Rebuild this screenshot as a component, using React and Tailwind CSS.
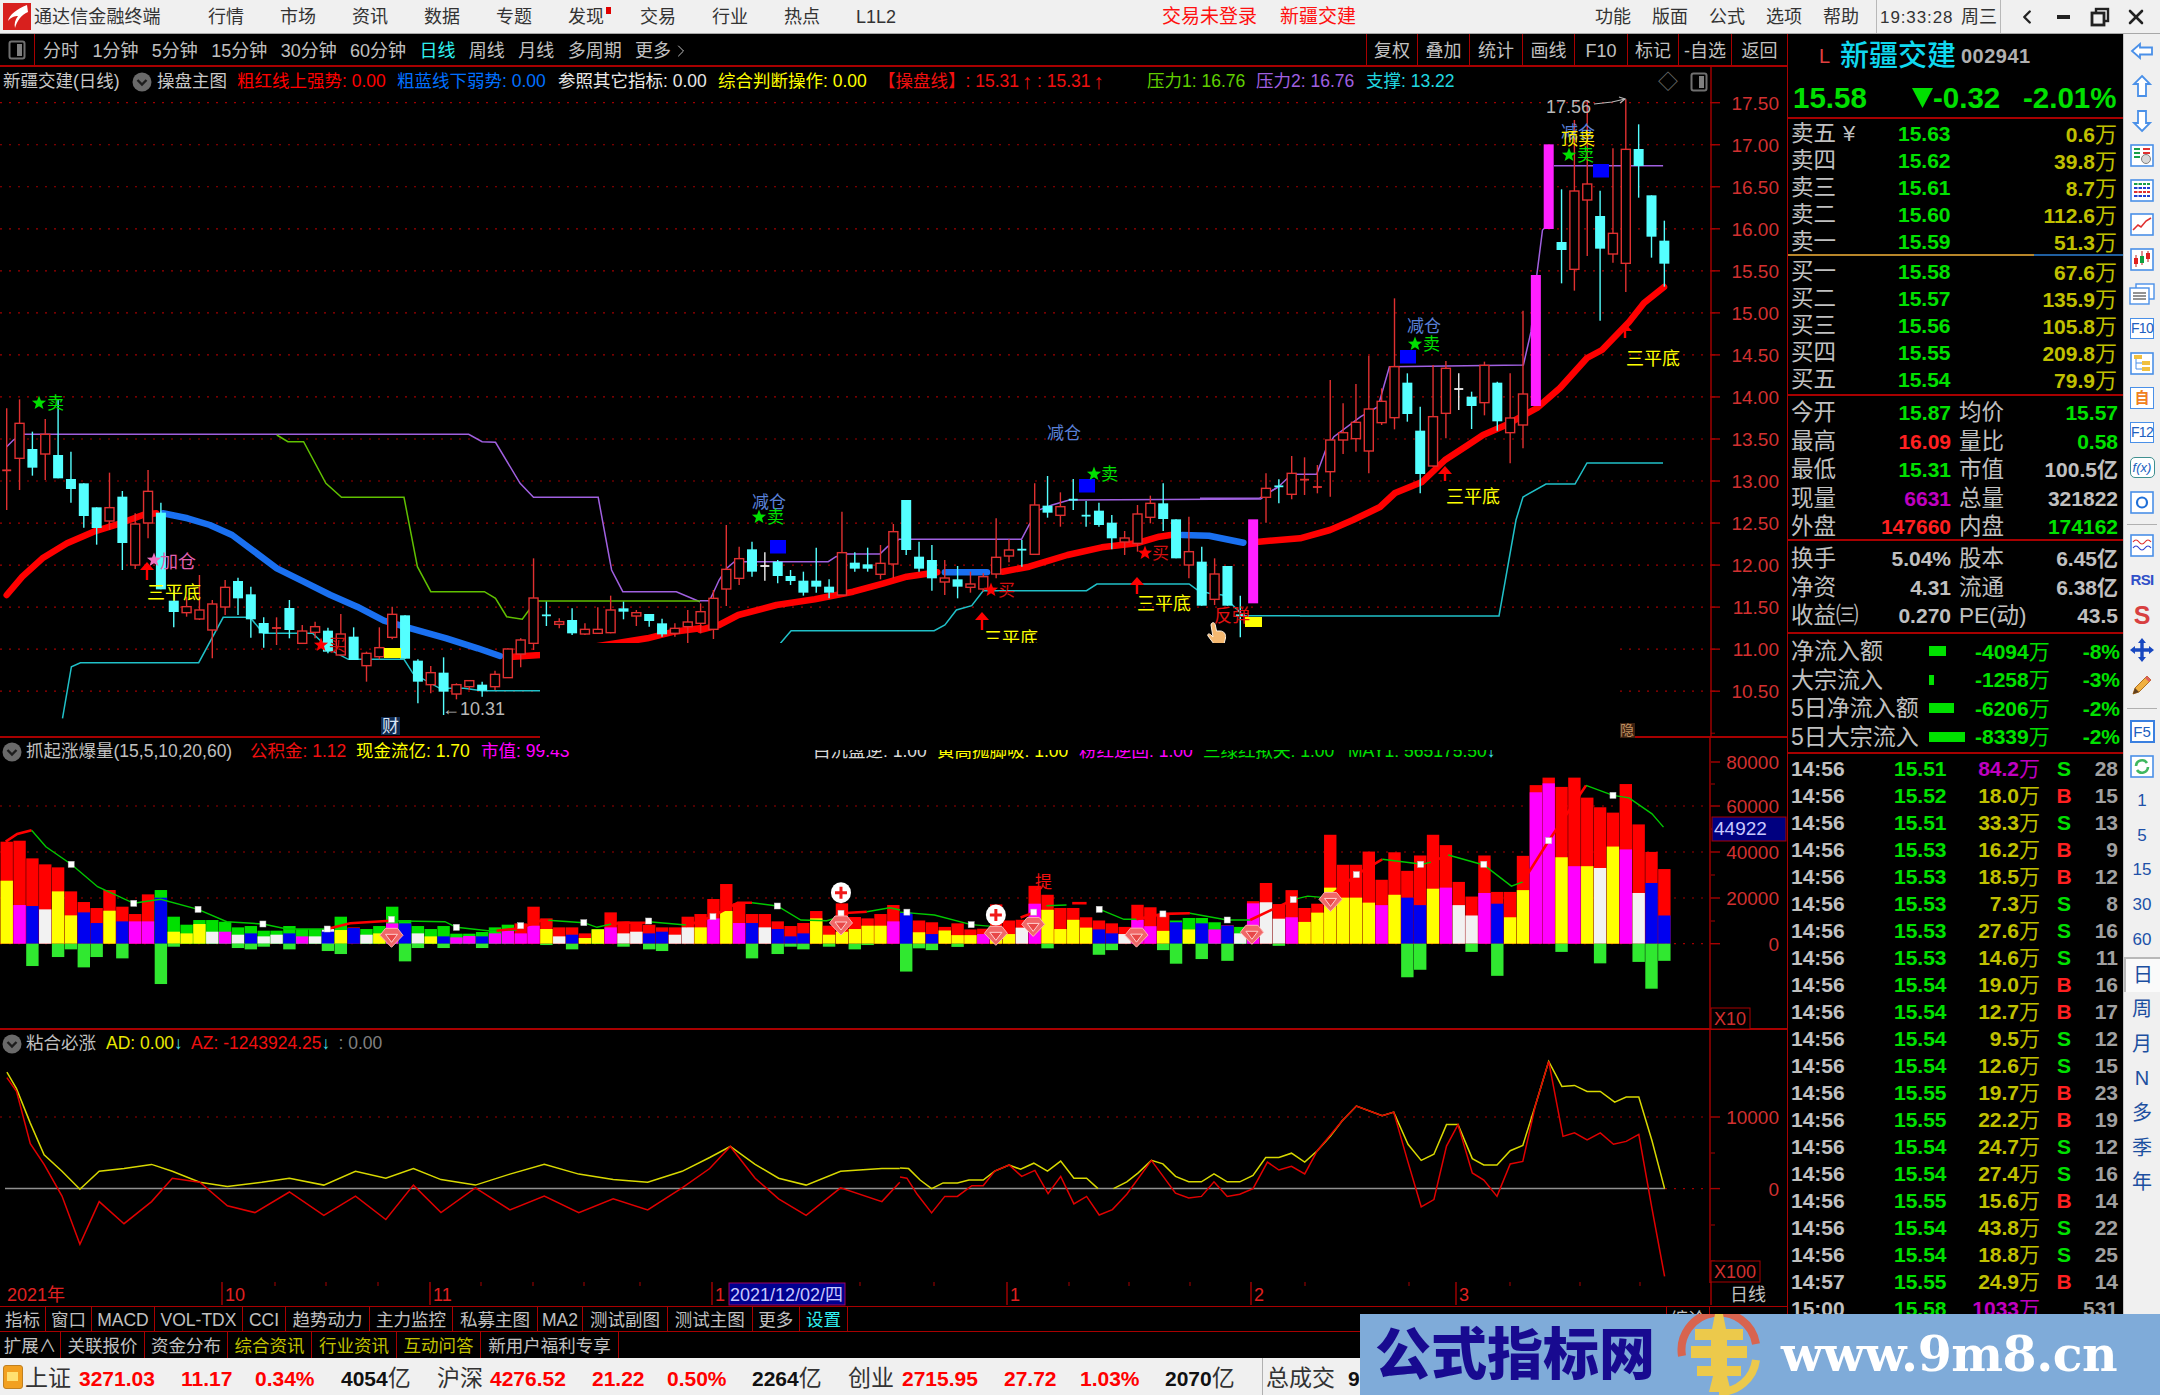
import { ChevronLeft, ChevronRight, X } from 'lucide-react'

// 坐标换算：从参考图的各个裁剪区域读出来的点，统一转成页面像素
const z7 = ([x, y]) => [x / 2.24, 380 + y / 3]
const z8 = ([x, y]) => [700 + x / 2.613, 440 + y / 3]
const z9 = ([x, y]) => [1200 + x / 2.613, 80 + y / 3]
const z10 = ([x, y]) => [x / 1.742, 730 + y / 3]
const z11 = ([x, y]) => [900 + x / 1.742, 730 + y / 2.8]
const s = ([x, y]) => [x * 1.378, y * 1.378]
const pts = (arr, fn) => arr.map(fn).map(([x, y]) => `${x.toFixed(1)},${y.toFixed(1)}`).join(' ')

const RED = '#a80000'
const candleX = (i) => 6.7 + 12.85 * i
const priceY = (p) => 102.7 + (17.5 - p) * 84.07

// [类型, 高, 实体上, 实体下, 低]
const candlesA = [
  ['r', 85, 271, 274, 390], ['r', 58, 130, 235, 330], ['c', 155, 207, 263, 287], ['r', 117, 163, 222, 300],
  ['c', 60, 225, 295, 295], ['c', 215, 297, 327, 368], ['c', 310, 310, 408, 443], ['c', 382, 382, 444, 494],
  ['r', 278, 383, 423, 450], ['c', 333, 350, 489, 570], ['r', 400, 432, 555, 567], ['r', 270, 334, 429, 475],
  ['c', 368, 398, 628, 628], ['c', 630, 662, 696, 742], ['r', 650, 680, 698, 710], ['r', 585, 690, 717, 720],
  ['r', 660, 672, 750, 835], ['r', 600, 622, 681, 705], ['c', 593, 603, 655, 705], ['c', 620, 643, 718, 773],
  ['c', 712, 729, 760, 803], ['r', 712, 744, 748, 795], ['c', 660, 684, 750, 775], ['r', 735, 753, 790, 790],
  ['r', 725, 740, 757, 775], ['c', 743, 752, 815, 820], ['r', 702, 762, 825, 825], ['c', 742, 770, 840, 840],
  ['r', 815, 820, 857, 905], ['r', 742, 803, 830, 838], ['r', 680, 703, 772, 778], ['c', 706, 706, 836, 836],
  ['c', 838, 842, 905, 970], ['r', 858, 878, 914, 940], ['c', 832, 878, 935, 1005], ['r', 910, 914, 942, 958],
  ['r', 900, 902, 920, 930], ['c', 905, 914, 932, 950], ['r', 872, 883, 920, 930], ['r', 805, 807, 893, 893],
  ['r', 775, 780, 822, 862], ['r', 535, 654, 790, 810], ['c', 665, 706, 709, 738], ['r', 715, 725, 733, 745],
  ['c', 685, 720, 760, 765], ['r', 730, 748, 762, 765], ['r', 682, 748, 760, 760], ['r', 647, 690, 758, 760],
  ['c', 665, 685, 695, 718], ['r', 690, 698, 708, 738], ['c', 702, 702, 723, 740], ['c', 716, 730, 763, 770],
  ['r', 730, 745, 760, 770], ['r', 690, 726, 740, 790], ['r', 670, 695, 730, 760],
]
const candlesB = [
  ['r', 450, 475, 568, 597], ['r', 255, 388, 447, 498], ['r', 320, 356, 415, 435], ['c', 305, 328, 395, 410],
  ['w', 337, 378, 380, 422], ['c', 360, 365, 408, 430], ['c', 390, 408, 423, 435], ['c', 395, 422, 458, 467],
  ['c', 323, 422, 440, 458], ['c', 418, 440, 458, 475], ['r', 215, 338, 465, 465], ['c', 337, 368, 386, 395],
  ['c', 323, 373, 386, 395], ['r', 315, 370, 403, 418], ['r', 252, 275, 372, 415], ['c', 180, 180, 330, 345],
  ['c', 305, 350, 386, 395], ['c', 315, 360, 415, 452], ['r', 360, 414, 426, 465], ['c', 378, 418, 440, 475],
  ['r', 395, 432, 442, 458], ['r', 400, 410, 447, 455], ['r', 235, 352, 402, 415], ['r', 298, 330, 348, 367],
  ['c', 300, 329, 331, 380], ['r', 130, 195, 343, 343], ['c', 108, 197, 218, 233], ['r', 157, 200, 226, 260],
  ['c', 117, 179, 181, 210], ['c', 183, 227, 229, 260], ['c', 188, 212, 255, 260], ['c', 225, 248, 295, 328],
  ['r', 273, 294, 306, 345], ['r', 195, 222, 310, 335], ['r', 167, 190, 232, 250], ['c', 130, 190, 237, 273],
  ['c', 238, 238, 355, 355], ['r', 230, 335, 375, 415], ['c', 320, 365, 497, 497], ['r', 355, 402, 478, 495],
  ['c', 378, 378, 497, 497], ['c', 467, 526, 528, 592], ['m', 238, 238, 490, 490], ['r', 100, 145, 172, 248],
  ['c', 118, 139, 141, 190],
]
const candlesC = [
  ['r', 1128, 1180, 1243, 1258], ['r', 1132, 1199, 1201, 1245], ['r', 1155, 1221, 1223, 1240], ['r', 900, 1080, 1175, 1250],
  ['r', 970, 1058, 1080, 1122], ['r', 912, 1027, 1076, 1115], ['r', 827, 987, 1113, 1180], ['r', 925, 964, 1028, 1035],
  ['r', 655, 860, 1013, 1048], ['c', 880, 908, 1002, 1025], ['c', 980, 1052, 1182, 1240], ['r', 855, 1010, 1158, 1160],
  ['r', 843, 865, 1000, 1075], ['w', 880, 927, 929, 990], ['c', 935, 950, 978, 1047], ['r', 845, 856, 968, 1006],
  ['c', 905, 908, 1024, 1052], ['r', 880, 1014, 1058, 1150], ['r', 692, 942, 1035, 1105], ['m', 585, 585, 978, 995],
  ['m', 193, 193, 447, 457], ['c', 328, 486, 510, 610], ['r', 120, 333, 568, 632], ['r', 60, 312, 360, 528],
  ['c', 332, 408, 506, 722], ['r', 205, 460, 522, 548], ['r', 58, 208, 550, 636], ['c', 133, 207, 258, 353],
  ['c', 346, 346, 470, 533], ['c', 422, 482, 551, 620],
]
const candles = [
  ...candlesA.map((c) => [c[0], ...c.slice(1).map((y) => 380 + y / 3)]),
  ...candlesB.map((c) => [c[0], ...c.slice(1).map((y) => 440 + y / 3)]),
  ...candlesC.slice(0).map((c) => [c[0], ...c.slice(1).map((y) => 80 + y / 3)]),
]

// 成交量柱：[上段色, 上段顶, 下段色, 下段顶, 负柱底]
const volA = [
  ['r', 335, 'y', 452, 0], ['r', 332, 'm', 525, 0], ['r', 385, 'b', 528, 708], ['r', 403, 'w', 538, 0], ['r', 412, 'y', 484, 681],
  ['r', 484, 'y', 556, 658], ['r', 516, 'b', 547, 712], ['r', 534, 'b', 579, 681], ['r', 480, 'y', 542, 0], ['r', 530, 'b', 574, 685],
  ['r', 552, 'm', 574, 0], ['r', 493, 'm', 574, 0], ['g', 480, 'b', 503, 762], ['g', 560, 'y', 605, 650], ['g', 584, 'y', 610, 0],
  ['g', 570, 'y', 582, 0], ['g', 570, 'w', 605, 0], ['g', 575, 'm', 605, 0], ['g', 592, 'w', 614, 654], ['g', 588, 'b', 610, 658],
  ['g', 602, 'w', 619, 650], ['g', 602, 'w', 614, 0], ['g', 588, 'b', 610, 658], ['g', 597, 'm', 619, 0], ['g', 597, 'w', 619, 0],
  ['w', 597, 'b', 605, 663], ['g', 560, 'y', 600, 672], ['r', 592, 'b', 594, 0], ['g', 597, 'w', 614, 0], ['g', 588, 'y', 610, 0],
  ['g', 530, 'm', 580, 0], ['g', 570, 'b', 580, 694], ['g', 588, 'w', 610, 654], ['g', 597, 'y', 619, 0], ['g', 588, 'b', 619, 654],
  ['g', 611, 'm', 622, 0], ['g', 611, 'm', 618, 0], ['g', 606, 'b', 619, 654], ['g', 592, 'm', 610, 0], ['g', 584, 'm', 597, 0],
  ['r', 580, 'm', 610, 0], ['r', 530, 'm', 587, 0], ['r', 565, 'y', 597, 645], ['r', 592, 'w', 619, 0], ['r', 592, 'b', 614, 658],
  ['r', 610, 'y', 624, 0], ['g', 597, 'y', 598, 0], ['r', 547, 'm', 592, 0], ['r', 574, 'w', 610, 650], ['r', 578, 'w', 605, 0],
  ['r', 584, 'b', 610, 658], ['r', 592, 'b', 605, 663], ['r', 592, 'w', 614, 0], ['r', 560, 'w', 592, 0], ['r', 552, 'y', 592, 0],
  ['r', 507, 'm', 565, 0], ['r', 462, 'y', 543, 0], ['r', 520, 'm', 579, 0], ['r', 552, 'b', 579, 685], ['r', 552, 'w', 592, 0],
  ['r', 574, 'b', 597, 672], ['r', 588, 'b', 619, 650], ['r', 579, 'b', 610, 658], ['r', 543, 'y', 565, 0], ['r', 587, 'y', 614, 650],
  ['r', 520, 'y', 605, 0], ['r', 561, 'y', 597, 658], ['r', 565, 'y', 587, 645], ['r', 552, 'y', 587, 0], ['r', 525, 'm', 574, 0],
]
const volB = [
  ['b', 510, 'b', 515, 675], ['r', 532, 'y', 565, 610], ['r', 537, 'b', 570, 615], ['r', 550, 'y', 560, 0], ['r', 540, 'y', 573, 606],
  ['r', 557, 'y', 573, 0], ['r', 555, 'm', 570, 0], ['r', 487, 'y', 550, 0], ['r', 532, 'y', 570, 0], ['r', 530, 'w', 552, 0],
  ['r', 435, 'm', 485, 0], ['r', 460, 'y', 502, 610], ['r', 497, 'y', 556, 0], ['r', 497, 'y', 530, 0], ['r', 523, 'y', 552, 0],
  ['r', 532, 'b', 557, 628], ['r', 540, 'b', 568, 615], ['r', 550, 'w', 570, 0], ['r', 488, 'm', 530, 0], ['r', 495, 'm', 548, 0],
  ['r', 515, 'y', 561, 615], ['g', 532, 'b', 537, 653], ['g', 525, 'y', 557, 0], ['g', 525, 'b', 540, 640], ['g', 537, 'm', 557, 0],
  ['r', 545, 'b', 546, 645], ['g', 550, 'w', 568, 0], ['r', 478, 'm', 484, 0], ['r', 427, 'w', 481, 0], ['r', 486, 'w', 527, 603],
  ['r', 447, 'm', 523, 0], ['r', 497, 'y', 536, 0], ['r', 485, 'y', 510, 0], ['r', 292, 'y', 440, 0], ['r', 376, 'y', 468, 0],
  ['r', 376, 'y', 468, 0], ['r', 339, 'y', 482, 0], ['r', 418, 'm', 489, 0], ['r', 341, 'y', 460, 0], ['r', 393, 'b', 468, 691],
  ['r', 350, 'b', 489, 670], ['r', 292, 'y', 443, 0], ['r', 321, 'm', 440, 0], ['r', 424, 'w', 489, 0], ['r', 465, 'w', 518, 620],
  ['r', 350, 'm', 455, 0], ['r', 452, 'b', 485, 687], ['r', 452, 'y', 523, 0], ['r', 351, 'y', 447, 0], ['r', 153, 'm', 173, 0],
  ['r', 132, 'm', 148, 0], ['r', 158, 'y', 355, 620], ['r', 132, 'm', 380, 0], ['r', 188, 'y', 380, 0], ['r', 215, 'w', 385, 652],
  ['r', 230, 'y', 325, 0], ['r', 150, 'm', 333, 0], ['r', 263, 'w', 455, 648], ['r', 340, 'b', 427, 723], ['r', 388, 'b', 518, 645],
]
const volColors = { r: '#ff0000', g: '#00e000', y: '#ffff00', b: '#0000f0', m: '#ff00ff', w: '#f2f2f2' }
const volY = 943.7
const volBars = [
  ...volA.map((v) => ({ top: (641 - v[1]) / 3, tc: v[0], low: (641 - v[3]) / 3, lc: v[2], neg: v[4] ? (v[4] - 641) / 3 : 0 })),
  ...volB.map((v) => ({ top: (597 - v[1]) / 2.8, tc: v[0], low: (597 - v[3]) / 2.8, lc: v[2], neg: v[4] ? (v[4] - 597) / 2.8 : 0 })),
]

const volLines = [
  ['r', z10, [[10, 335], [30, 312], [55, 301]]],
  ['g', z10, [[55, 301], [80, 350], [124, 403], [170, 470], [233, 520], [250, 515], [280, 508], [345, 538], [395, 575], [458, 582], [500, 597], [570, 597]]],
  ['r', z10, [[570, 597], [610, 580], [680, 572]]],
  ['g', z10, [[680, 572], [775, 575], [795, 592], [850, 602], [900, 600]]],
  ['r', z10, [[865, 602], [905, 595], [945, 570]]],
  ['g', z10, [[955, 571], [1017, 578], [1040, 592], [1065, 582]]],
  ['r', z10, [[1065, 582], [1090, 578], [1130, 578]]],
  ['g', z10, [[1130, 575], [1195, 585]]],
  ['r', z10, [[1195, 588], [1240, 560], [1285, 518], [1310, 518]]],
  ['g', z10, [[1310, 518], [1354, 528], [1395, 570], [1440, 572], [1465, 560]]],
  ['r', z10, [[1465, 550], [1510, 545]]],
  ['g', z10, [[1510, 545], [1550, 533], [1568, 540]]],
  ['g', z11, [[0, 510], [60, 518], [124, 545], [160, 550]]],
  ['r', z11, [[210, 525], [235, 510]]],
  ['g', z11, [[255, 492], [290, 490]]],
  ['r', z11, [[300, 485], [325, 485]]],
  ['g', z11, [[345, 500], [390, 530], [412, 530]]],
  ['r', z11, [[412, 530], [458, 515], [505, 513]]],
  ['g', z11, [[505, 513], [570, 532], [610, 532]]],
  ['r', z11, [[610, 532], [685, 475]]],
  ['g', z11, [[685, 475], [710, 465], [745, 470]]],
  ['r', z11, [[745, 470], [795, 405], [840, 362]]],
  ['g', z11, [[840, 362], [910, 376], [925, 370]]],
  ['r', z11, [[925, 370], [955, 350]]],
  ['g', z11, [[955, 350], [1017, 378], [1065, 437], [1085, 425]]],
  ['r', z11, [[1085, 425], [1130, 310], [1195, 155]]],
  ['g', z11, [[1195, 155], [1242, 183], [1270, 190], [1310, 235], [1330, 272]]],
]
const volMarks = [
  ...[[124, 403], [233, 520], [345, 538], [458, 582], [570, 597], [682, 568], [795, 592], [907, 587], [1017, 578], [1130, 573], [1242, 560], [1354, 528], [1465, 550]].map(z10),
  ...[[12, 510], [124, 545], [233, 510], [347, 502], [458, 515], [570, 532], [685, 475], [795, 405], [907, 376], [1017, 376], [1130, 310], [1242, 183]].map(z11),
]
const gems = [...[[682, 622], [1465, 585]].map(z10), ...[[167, 575], [232, 550], [412, 580], [613, 572], [750, 480]].map(z11)]

const adYellowL = [[5, 778], [12, 790], [22, 815], [32, 838], [45, 850], [58, 863], [72, 850], [90, 848], [110, 845], [125, 850], [145, 858], [165, 861], [190, 858], [210, 855], [235, 860], [258, 850], [280, 855], [300, 848], [320, 856], [345, 860], [370, 852], [395, 845], [420, 852], [445, 856], [470, 858], [495, 850], [515, 840], [530, 832], [548, 845], [565, 855], [585, 860], [610, 850], [640, 848], [653, 848]]
const adRedL = [[5, 782], [12, 792], [22, 830], [32, 845], [45, 868], [58, 903], [72, 872], [90, 888], [110, 872], [125, 855], [145, 858], [165, 875], [185, 880], [210, 865], [235, 882], [258, 868], [280, 885], [300, 860], [320, 880], [345, 862], [370, 878], [395, 868], [420, 880], [445, 870], [470, 878], [495, 862], [515, 848], [530, 832], [548, 855], [565, 870], [585, 882], [610, 862], [640, 872], [653, 858]]
const adYellowR = [[0, 1226], [15, 1228], [35, 1260], [55, 1284], [75, 1268], [100, 1268], [120, 1260], [145, 1260], [165, 1235], [190, 1218], [210, 1230], [233, 1213], [257, 1235], [280, 1207], [303, 1255], [325, 1255], [345, 1284]]
const adYellowR2 = [[372, 1284], [395, 1265], [415, 1240], [438, 1205], [458, 1215], [480, 1250], [503, 1265], [525, 1265], [547, 1243], [570, 1265], [592, 1265], [615, 1247], [637, 1197], [660, 1197], [682, 1185], [705, 1210], [727, 1178], [750, 1137], [770, 1095], [795, 1053], [840, 1080], [860, 1070], [885, 1160], [908, 1205], [930, 1188], [952, 1105], [972, 1105], [997, 1200], [1017, 1218], [1040, 1218], [1063, 1178], [1085, 1163], [1107, 1050], [1130, 928], [1153, 998], [1175, 995], [1197, 1012], [1220, 1012], [1245, 1042], [1265, 1028], [1287, 1028], [1310, 1150], [1332, 1284]]
const adRedR = [[0, 1252], [12, 1255], [30, 1300], [55, 1352], [78, 1306], [100, 1306], [125, 1276], [145, 1276], [165, 1235], [190, 1218], [212, 1250], [235, 1233], [258, 1298], [280, 1250], [303, 1327], [325, 1306], [347, 1358], [370, 1343], [395, 1300], [438, 1205], [480, 1297], [503, 1310], [525, 1306], [547, 1265], [570, 1306], [592, 1300], [615, 1284], [640, 1210], [660, 1232], [682, 1222], [705, 1243], [727, 1178], [770, 1095], [795, 1053], [840, 1080], [860, 1070], [885, 1210], [908, 1335], [930, 1315], [952, 1165], [972, 1105], [997, 1240], [1017, 1260], [1040, 1306], [1063, 1215], [1085, 1208], [1107, 1050], [1130, 928], [1155, 1138], [1175, 1128], [1197, 1148], [1220, 1128], [1243, 1160], [1265, 1152], [1287, 1132], [1310, 1340], [1332, 1530]]

// 主图上的文字标注
const LABELS = [
  ['卖', 47, 403, '#00e000', 17], ['加仓', 160, 561, '#e060b0', 18], ['三平底', 147, 592, '#ffff00', 18], ['买', 329, 645, '#d01010', 17],
  ['减仓', 752, 502, '#5a80d8', 17], ['卖', 767, 517, '#00e000', 17], ['买', 998, 590, '#d01010', 17], ['三平底', 984, 638, '#ffff00', 18],
  ['减仓', 1047, 433, '#5a80d8', 17], ['卖', 1101, 474, '#00e000', 17], ['买', 1152, 553, '#d01010', 17], ['三平底', 1137, 603, '#ffff00', 18],
  ['反弹', 1214, 615, '#e01010', 18], ['减仓', 1561, 132, '#5a80d8', 17], ['顶卖', 1561, 139, '#ffee00', 17], ['卖', 1577, 155, '#00e000', 17],
  ['减仓', 1407, 326, '#5a80d8', 17], ['卖', 1423, 344, '#00e000', 17], ['三平底', 1446, 496, '#ffff00', 18], ['三平底', 1626, 358, '#ffff00', 18],
  ['←10.31', 442, 708, '#b8b8b8', 18], ['17.56', 1546, 106, '#b8b8b8', 18],
]
const STARS = [[39, 403, '#00e000'], [154, 560, '#f070c0'], [321, 645, '#ff0000'], [759, 517, '#00e000'], [991, 590, '#ff0000'], [1094, 474, '#00e000'], [1145, 553, '#ff0000'], [1569, 155, '#00e000'], [1415, 344, '#00e000']]
const ARROWS = [[147, 562, 580], [982, 612, 630], [1137, 577, 594], [1445, 466, 481], [1625, 323, 338]]
const BLUE_MARKS = [[770, 540], [1079, 479], [1400, 350], [1593, 164]]
const YELLOW_MARKS = [[384, 648], [1245, 617]]

function Star({ x, y, color }) {
  const d = []
  for (let i = 0; i < 10; i++) {
    const r = i % 2 ? 3.2 : 7.5
    const a = -Math.PI / 2 + (i * Math.PI) / 5
    d.push(`${(x + r * Math.cos(a)).toFixed(1)},${(y + r * Math.sin(a)).toFixed(1)}`)
  }
  return <polygon points={d.join(' ')} fill={color} />
}

function Candle({ c, i }) {
  const [t, hi, top, bot, lo] = c
  const x = candleX(i)
  if (t === 'm') {
    return <rect x={x - 5} y={top} width={10} height={bot - top} fill="#ff20ff" />
  }
  const color = t === 'r' ? '#e03030' : t === 'w' ? '#f0f0f0' : '#54ffff'
  const doji = bot - top < 2
  return (
    <g>
      <line x1={x} x2={x} y1={hi} y2={lo} stroke={color} strokeWidth={1.4} />
      {doji ? (
        <line x1={x - 4.5} x2={x + 4.5} y1={top} y2={top} stroke={color} strokeWidth={1.8} />
      ) : t === 'r' ? (
        <rect x={x - 4.5} y={top} width={9} height={bot - top} fill="#000" stroke={color} strokeWidth={1.4} />
      ) : (
        <rect x={x - 5} y={top} width={10} height={bot - top} fill={color} />
      )}
    </g>
  )
}

function PriceAxis({ values, y, tick, label = (v) => v }) {
  return (
    <g>
      {values.map((v) => (
        <g key={v}>
          <line x1={1711} x2={1720} y1={y(v)} y2={y(v)} stroke={RED} strokeWidth={1.4} />
          <text x={1779} y={y(v) + 7} textAnchor="end" fontSize={19} fill="#d23030">{label(v)}</text>
        </g>
      ))}
      {tick.map((t) => <line key={t} x1={1711} x2={1715} y1={t} y2={t} stroke={RED} />)}
    </g>
  )
}

function MainChart() {
  const prices = [17.5, 17, 16.5, 16, 15.5, 15, 14.5, 14, 13.5, 13, 12.5, 12, 11.5, 11, 10.5]
  return (
    <svg className="absolute inset-0" width="1787" height="671" viewBox="0 67 1787 671">
      {prices.map((p) => (
        <line key={p} x1={0} x2={1711} y1={priceY(p)} y2={priceY(p)} stroke="#a00000" strokeDasharray="2 7" strokeWidth={1.2} />
      ))}
      <PriceAxis values={prices} y={priceY} tick={prices.map((p) => priceY(p) + 42)} label={(v) => v.toFixed(2)} />
      <line x1={1711} x2={1711} y1={67} y2={738} stroke={RED} strokeWidth={1.4} />
      <line x1={0} x2={1787} y1={737} y2={737} stroke={RED} strokeWidth={2} />

      {/* 压力/支撑细线 */}
      <g fill="none" strokeWidth={1.5}>
        <polyline stroke="#a060e0" points={pts([[15, 200], [30, 180], [50, 163], [1050, 163], [1080, 185], [1110, 187], [1165, 310], [1195, 352], [1340, 352], [1370, 570], [1395, 635], [1515, 635], [1568, 665]], z7)} />
        <polyline stroke="#a060e0" points={pts([[0, 482], [25, 482], [50, 420], [70, 385], [90, 365], [335, 365], [355, 350], [385, 342], [470, 342], [490, 320], [520, 298], [840, 298], [860, 255], [885, 210], [920, 195], [965, 180], [1465, 177], [1490, 155], [1513, 140]], z8)} />
        <polyline stroke="#a060e0" points={pts([[0, 1255], [155, 1255], [205, 1220], [240, 1183], [305, 1183], [330, 1105], [350, 1070], [420, 1010], [465, 980], [495, 860], [845, 855], [865, 755], [880, 585], [895, 450], [900, 445]], z9)} />
        <polyline stroke="#a060e0" points={pts([[925, 257], [1210, 257]], z9)} />
        <polyline stroke="#60c000" points={pts([[620, 165], [645, 185], [680, 185], [730, 310], [765, 352], [905, 352], [935, 560], [965, 635], [1085, 635], [1110, 655], [1135, 710], [1170, 718], [1185, 690], [1205, 663], [1568, 663]], z7)} />
        <polyline stroke="#20c0c8" points={pts([[140, 1015], [160, 860], [180, 848], [445, 848], [500, 712], [560, 712], [590, 760], [700, 760], [740, 810], [780, 838], [905, 838], [925, 880], [985, 925], [1040, 925], [1079, 932], [1210, 932]], z7)} />
        <polyline stroke="#20c0c8" points={pts([[210, 610], [238, 572], [612, 572], [640, 555], [670, 510], [710, 497], [740, 452], [1010, 452], [1037, 432], [1278, 432], [1300, 450], [1330, 460], [1365, 465], [1420, 527], [1530, 527], [1568, 527]], z8)} />
        <polyline stroke="#20c0c8" points="1300,616 1499,616 1516,520 1523,497 1546,484 1575,484 1587,463 1663,463" />
      </g>

      {/* 粗均线 */}
      <g fill="none" strokeWidth={6.5} strokeLinecap="round" strokeLinejoin="round">
        <polyline stroke="#ff0000" points={pts([[15, 645], [50, 590], [95, 535], [150, 490], [210, 455], [270, 430], [320, 405], [350, 400]], z7)} />
        <polyline stroke="#1a70f0" points={pts([[365, 400], [420, 415], [470, 435], [520, 465], [570, 515], [620, 565], [680, 605], [740, 645], [800, 680], [860, 722], [920, 745], [1000, 775], [1070, 805], [1120, 828]], z7)} />
        <polyline stroke="#ff0000" points={pts([[1150, 830], [1210, 825], [1380, 790], [1450, 775], [1510, 755], [1568, 745]], z7)} />
        <polyline stroke="#ff0000" points={pts([[0, 570], [50, 555], [100, 525], [200, 495], [300, 478], [400, 455], [480, 430], [540, 410], [620, 397]], z8)} />
        <polyline stroke="#1a70f0" points={pts([[640, 397], [750, 397]], z8)} />
        <polyline stroke="#ff0000" points={pts([[790, 395], [860, 380], [960, 345], [1050, 322], [1140, 310], [1200, 290], [1230, 285]], z8)} />
        <polyline stroke="#1a70f0" points={pts([[1260, 285], [1330, 287], [1420, 308]], z8)} />
        <polyline stroke="#ff0000" points={`${pts([[1460, 305], [1568, 295]], z8)} 1330,530 1353,520 1380,507 1395,493 1422,482 1445,460 1468,445 1483,435 1506,425 1537,408 1560,388 1587,358 1602,350 1629,322 1644,303 1664,287`} />
      </g>

      {candles.map((c, i) => <Candle key={i} c={c} i={i} />)}

      {BLUE_MARKS.map(([x, y]) => <rect key={x} x={x} y={y} width={16} height={13.5} fill="#0000ff" />)}
      {YELLOW_MARKS.map(([x, y]) => <rect key={x} x={x} y={y} width={17} height={10} fill="#ffff00" />)}
      {STARS.map(([x, y, c]) => <Star key={x} x={x} y={y} color={c} />)}
      {ARROWS.map(([x, y1, y2]) => (
        <g key={x}>
          <line x1={x} x2={x} y1={y1 + 6} y2={y2} stroke="#ff0000" strokeWidth={2.4} />
          <polygon points={`${x},${y1} ${x + 7},${y1 + 8} ${x - 7},${y1 + 8}`} fill="#ff0000" />
        </g>
      ))}
      {LABELS.map(([t, x, y, c, fs], i) => (
        <text key={i} x={x} y={y + fs * 0.38} fontSize={fs} fill={c}>{t}</text>
      ))}
      <polyline points="1594,104 1612,102 1625,99" fill="none" stroke="#b8b8b8" strokeWidth={1.2} />
      <polyline points="1619,97 1625,99 1620,103" fill="none" stroke="#b8b8b8" strokeWidth={1.2} />

      {/* 手形光标 */}
      <g transform="translate(1207 621)">
        <path d="M5 2 C7 1 8 2 8.5 5 L9.5 10 L13 10 C17 10 19 13 18.5 17 L17 23 L7 23 L1 15 C0 13 2 12 4 14 L6 16 L4 4 C4 3 4.5 2.5 5 2 Z" fill="#f4b870" stroke="#fff2e0" strokeWidth={1} />
      </g>

      <rect x={381} y={717} width={19} height={18} fill="#102a50" />
      <text x={382} y={732} fontSize={17} fill="#d8e4f4">财</text>
    </svg>
  )
}

function VolChart() {
  const grid = [806, 852, 898, 943.7]
  const axis = { 80000: 762, 60000: 806, 40000: 852, 20000: 898, 0: 943.7 }
  return (
    <svg className="absolute inset-0" width="1787" height="292" viewBox="0 738 1787 292">
      {grid.map((y) => <line key={y} x1={0} x2={1711} y1={y} y2={y} stroke="#a00000" strokeDasharray="2 7" strokeWidth={1.2} />)}
      <PriceAxis values={[80000, 60000, 40000, 20000, 0]} y={(v) => axis[v]} tick={[784, 829, 875, 921]} />
      <line x1={1710} x2={1710} y1={738} y2={1030} stroke={RED} strokeWidth={1.4} />
      <line x1={0} x2={1787} y1={1029} y2={1029} stroke={RED} strokeWidth={2} />

      {volBars.map((v, i) => {
        const x = candleX(i) - 6.2
        return (
          <g key={i}>
            <rect x={x} y={volY - v.top} width={12.4} height={v.top} fill={volColors[v.tc]} />
            <rect x={x} y={volY - v.low} width={12.4} height={v.low} fill={volColors[v.lc]} />
            {v.neg > 0 && <rect x={x} y={volY} width={12.4} height={v.neg} fill="#30e830" />}
          </g>
        )
      })}
      {volLines.map(([c, fn, arr], i) => (
        <polyline key={i} points={pts(arr, fn)} fill="none" stroke={c === 'r' ? '#ff0000' : '#00c800'} strokeWidth={c === 'r' ? 2.6 : 1.4} />
      ))}
      {volMarks.map(([x, y], i) => <rect key={i} x={x - 3} y={y - 3} width={6} height={6} fill="#fff" stroke="#c0c0c0" strokeWidth={0.5} />)}
      {gems.map(([x, y], i) => (
        <g key={i} transform={`translate(${x} ${y})`}>
          <polygon points="-6,-9 6,-9 11.5,-2 0,10 -11.5,-2" fill="#f06868" stroke="#ffb0b0" />
          <polygon points="-6,-3 6,-3 0,5" fill="#e84848" stroke="#ffd0d0" />
        </g>
      ))}
      {[z10([1465, 488]), z11([167, 518])].map(([x, y], i) => (
        <g key={i}>
          <ellipse cx={x} cy={y} rx={10} ry={10.5} fill="#fff" />
          <path d={`M${x - 6} ${y} H${x + 6} M${x} ${y - 6} V${y + 6}`} stroke="#f01818" strokeWidth={3} />
        </g>
      ))}
      <text x={1035} y={888} fontSize={17} fill="#f01010">提</text>

      <rect x={1712} y={817} width={74} height={24} fill="#000080" stroke={RED} />
      <text x={1714} y={835} fontSize={19} fill="#c8c8ff">44922</text>
      <rect x={1711} y={1008} width={39} height={21} fill="#000" stroke={RED} />
      <text x={1714} y={1025} fontSize={18} fill="#d23030">X10</text>
    </svg>
  )
}

function AdChart() {
  return (
    <svg className="absolute inset-0" width="1787" height="253" viewBox="0 1030 1787 253">
      <line x1={0} x2={1711} y1={1117} y2={1117} stroke="#a00000" strokeDasharray="2 7" strokeWidth={1.2} />
      <line x1={1665} x2={1711} y1={1188.6} y2={1188.6} stroke="#a00000" strokeDasharray="2 7" strokeWidth={1.2} />
      <line x1={5} x2={1665} y1={1188.6} y2={1188.6} stroke="#909090" strokeWidth={1.5} />
      <PriceAxis values={[10000, 0]} y={(v) => (v ? 1117 : 1188.6)} tick={[1153, 1225, 1261]} />
      <line x1={1710} x2={1710} y1={1030} y2={1283} stroke={RED} strokeWidth={1.4} />
      <g fill="none" strokeWidth={1.5}>
        <polyline stroke="#d8d800" points={pts(adYellowL, s)} />
        <polyline stroke="#d8d800" points={pts(adYellowR, z11)} />
        <polyline stroke="#d8d800" points={pts(adYellowR2, z11)} />
        <polyline stroke="#e00000" points={pts(adRedL, s)} />
        <polyline stroke="#e00000" points={pts(adRedR, z11)} />
      </g>
      <rect x={1711} y={1261} width={49} height={21} fill="#000" stroke={RED} />
      <text x={1714} y={1278} fontSize={18} fill="#d23030">X100</text>
    </svg>
  )
}

function DateAxis() {
  const marks = [[222, '10'], [430, '11'], [712, '1'], [1007, '1'], [1251, '2'], [1456, '3']]
  const ticks = [275, 326, 378, 481, 533, 584, 640, 860, 934, 1069, 1129, 1190, 1305, 1409, 1510, 1580, 1640]
  return (
    <svg className="block" width="1787" height="24" viewBox="0 1282 1787 24">
      <text x={7} y={1301} fontSize={18} fill="#e02020">2021年</text>
      {marks.map(([x, t]) => (
        <g key={x}>
          <line x1={x} x2={x} y1={1282} y2={1305} stroke={RED} strokeWidth={1.4} />
          <text x={x + 3} y={1301} fontSize={18} fill="#e02020">{t}</text>
        </g>
      ))}
      {ticks.map((x) => <line key={x} x1={x} x2={x} y1={1282} y2={1286} stroke={RED} />)}
      <rect x={729} y={1283} width={116} height={22} fill="#000090" stroke="#a00060" />
      <text x={730} y={1301} fontSize={18} fill="#c8c8ff">2021/12/02/四</text>
      <line x1={1711} x2={1711} y1={1282} y2={1305} stroke={RED} strokeWidth={1.4} />
      <text x={1730} y={1301} fontSize={18} fill="#c0c0c0">日线</text>
    </svg>
  )
}

function ChevronCircle() {
  return (
    <svg width="20" height="20" viewBox="0 0 20 20" className="shrink-0">
      <circle cx="10" cy="10" r="9.5" fill="#6a6a6a" />
      <path d="M5.5 8 L10 12.5 L14.5 8" fill="none" stroke="#1c1c1c" strokeWidth="2.4" />
    </svg>
  )
}

function BoxToggle() {
  return (
    <svg width="18" height="20" viewBox="0 0 18 20">
      <rect x="1.5" y="1.5" width="15" height="17" rx="2" fill="none" stroke="#707070" strokeWidth="2" />
      <rect x="9" y="4" width="5" height="12" fill="#808080" />
    </svg>
  )
}

function TitleBar() {
  const menu = ['行情', '市场', '资讯', '数据', '专题', '发现', '交易', '行业', '热点', 'L1L2']
  const right = ['功能', '版面', '公式', '选项', '帮助']
  return (
    <div className="h-[34px] bg-[#f0f0f0] border-b border-[#a8a8a8] flex items-center text-[18px] text-[#333] relative">
      <svg width="28" height="27" viewBox="0 0 28 27" className="ml-[3px] shrink-0">
        <rect width="28" height="27" fill="#d8201e" />
        <path d="M24 2 C14 6 6 12 5 18 C8 14 12 13 15 13 C12 17 11 21 12 25 C14 18 18 12 25 9 Z" fill="#fff" />
      </svg>
      <span className="ml-[3px] pt-[2px] w-[127px] tracking-[0.1px] whitespace-nowrap">通达信金融终端</span>
      <div className="ml-[47px] pt-[2px] flex">
        {menu.map((m) => (
          <span key={m} className="w-[72px] relative whitespace-nowrap">
            {m}
            {m === '发现' && <i className="absolute left-[38px] top-[3px] w-[5px] h-[7px] bg-[#e00000]" />}
          </span>
        ))}
      </div>
      <span className="ml-[234px] pt-[2px] text-[#ff1010] text-[19px] whitespace-nowrap">交易未登录</span>
      <span className="ml-[23px] pt-[2px] text-[#ff1010] text-[19px] whitespace-nowrap">新疆交建</span>
      <div className="ml-[239px] pt-[2px] flex gap-[21px]">
        {right.map((m) => <span key={m} className="w-[36px] whitespace-nowrap">{m}</span>)}
      </div>
      <div className="ml-[17px] h-full border-x border-[#b8b8b8] w-[125px] flex items-center justify-between px-[3px] pt-[2px] text-[17px] whitespace-nowrap">
        <span className="tracking-[0.9px]">19:33:28</span>
        <span className="text-[18px]">周三</span>
      </div>
      <div className="flex items-center flex-1 text-[#222]">
        <ChevronLeft size={22} strokeWidth={2.6} className="ml-[15px]" />
        <i className="ml-[19px] w-[13px] h-[4px] bg-[#222]" />
        <svg width="20" height="20" viewBox="0 0 20 20" className="ml-[20px]">
          <rect x="6" y="2" width="12" height="12" fill="none" stroke="#222" strokeWidth="2.4" />
          <rect x="2" y="6" width="12" height="12" fill="#f0f0f0" stroke="#222" strokeWidth="2.8" />
        </svg>
        <X size={24} strokeWidth={2.6} className="ml-[14px]" />
      </div>
    </div>
  )
}

function PeriodBar() {
  const items = ['分时', '1分钟', '5分钟', '15分钟', '30分钟', '60分钟', '日线', '周线', '月线', '多周期']
  const tools = [['复权', 51], ['叠加', 52], ['统计', 53], ['画线', 52], ['F10', 53], ['标记', 51], ['-自选', 53], ['返回', 56]]
  return (
    <div className="h-[33px] border-b-2 border-[#a80000] flex items-center text-[18px] text-[#c0c0c0]">
      <div className="w-[35px] h-full border-r border-[#a80000] flex items-center justify-center">
        <BoxToggle />
      </div>
      <div className="ml-[8px] pt-[3px] flex items-center gap-[13.4px] whitespace-nowrap">
        {items.map((t) => <span key={t} className={t === '日线' ? 'text-[#30f0f0]' : ''}>{t}</span>)}
        <span className="flex items-center">更多<ChevronRight size={20} strokeWidth={1.2} /></span>
      </div>
      <div className="ml-auto flex h-full">
        {tools.map(([t, w]) => (
          <span key={t} style={{ width: w }} className="border-l border-[#a80000] pt-[3px] flex items-center justify-center whitespace-nowrap">{t}</span>
        ))}
      </div>
    </div>
  )
}

function MainHeader() {
  return (
    <div className="absolute left-0 right-[76px] top-[1px] h-[27px] flex items-center pl-[3px] text-[17.5px] whitespace-nowrap">
      <span className="w-[129px] text-[#c8c8c8]">新疆交建(日线)</span>
      <ChevronCircle />
      <span className="ml-[5px] w-[80px] text-[#c8c8c8]">操盘主图</span>
      <span className="w-[160px] text-[#ff0000]">粗红线上强势: 0.00</span>
      <span className="w-[161px] text-[#0070ff]">粗蓝线下弱势: 0.00</span>
      <span className="w-[160px] text-[#e8e8e8]">参照其它指标: 0.00</span>
      <span className="w-[160px] text-[#ffff00]">综合判断操作: 0.00</span>
      <span className="w-[269px] text-[#f01010] flex items-center">
        【操盘线】: 15.31<span className="text-[21px] w-[16px] text-center">↑</span>
        <span className="ml-[2px]">: 15.31</span><span className="text-[21px] w-[16px] text-center">↑</span>
      </span>
      <span className="w-[109px] text-[#60d000]">压力1: 16.76</span>
      <span className="w-[110px] text-[#a060e0]">压力2: 16.76</span>
      <span className="w-[294px] text-[#20d8e0]">支撑: 13.22</span>
      <span className="text-[#707070] text-[20px] mr-[12px] -ml-[2px]">◇</span>
      <BoxToggle />
    </div>
  )
}

function VolHeader() {
  return (
    <>
      <div className="absolute left-0 top-[1px] h-[25px] flex items-center pl-[2px] text-[17.5px] whitespace-nowrap">
        <ChevronCircle />
        <span className="ml-[4px] w-[224px] text-[#c0c0c0]">抓起涨爆量(15,5,10,20,60)</span>
        <span className="w-[106px] text-[#f01010]">公积金: 1.12</span>
        <span className="w-[125px] text-[#ffff00]">现金流亿: 1.70</span>
        <span className="text-[#ff00ff]">市值: 99.43</span>
      </div>
      <div className="absolute left-[813px] top-[1px] h-[25px] flex items-center text-[17.5px] whitespace-nowrap">
        <span className="w-[124px] text-[#d8d8d8]">白沉盘逆: 1.00</span>
        <span className="w-[142px] text-[#ffff00]">黄高抛脚吸: 1.00</span>
        <span className="w-[124px] text-[#ff00ff]">粉红逆回: 1.00</span>
        <span className="w-[145px] text-[#00e000]">三绿红揿失: 1.00</span>
        <span className="text-[#00e000]">MAY1: 565175.50</span>
        <span className="text-[#40f0f0]">↓</span>
      </div>
    </>
  )
}

function AdHeader() {
  return (
    <div className="absolute left-0 top-[1px] h-[25px] flex items-center pl-[2px] text-[17.5px] whitespace-nowrap">
      <ChevronCircle />
      <span className="ml-[4px] w-[80px] text-[#c0c0c0]">粘合必涨</span>
      <span className="text-[#e8e800]">AD: 0.00</span>
      <span className="text-[#40e0f0] w-[17px]">↓</span>
      <span className="text-[#f01010]">AZ: -1243924.25</span>
      <span className="text-[#40e0f0] w-[17px]">↓</span>
      <span className="text-[#808080]">: 0.00</span>
    </div>
  )
}

function TabRow({ tabs, height, extra, pad }) {
  return (
    <div style={{ height }} className="flex border-b border-[#a80000] text-[17.5px] text-[#c0c0c0] whitespace-nowrap relative">
      {tabs.map(([t, w, c]) => (
        <span key={t} style={{ width: w, paddingTop: pad }} className={`border-r border-[#a80000] flex items-center justify-center ${c || ''}`}>{t}</span>
      ))}
      {extra}
    </div>
  )
}

function BottomTabs() {
  return (
    <div className="border-t border-[#a80000]">
      <TabRow
        height={25}
        pad={2}
        tabs={[
          ['指标', 46], ['窗口', 46], ['MACD', 63], ['VOL-TDX', 88], ['CCI', 43], ['趋势动力', 84], ['主力监控', 83], ['私募主图', 85],
          ['MA2', 45], ['测试副图', 85], ['测试主图', 84.5], ['更多', 47.5], ['设置', 48, 'text-[#30f0f0]'],
        ]}
        extra={
          <span className="ml-[818px] w-[44px] border-x border-[#a80000] flex items-center justify-center">缠论</span>
        }
      />
      <TabRow
        height={27}
        pad={3}
        tabs={[
          ['扩展∧', 61], ['关联报价', 84], ['资金分布', 83], ['综合资讯', 84, 'text-[#c0c000]'], ['行业资讯', 85, 'text-[#c0c000]'],
          ['互动问答', 84, 'text-[#c0c000]'], ['新用户福利专享', 138],
        ]}
      />
    </div>
  )
}

const book = {
  sell: [['卖五', '15.63', '0.6', '¥'], ['卖四', '15.62', '39.8'], ['卖三', '15.61', '8.7'], ['卖二', '15.60', '112.6'], ['卖一', '15.59', '51.3']],
  buy: [['买一', '15.58', '67.6'], ['买二', '15.57', '135.9'], ['买三', '15.56', '105.8'], ['买四', '15.55', '209.8'], ['买五', '15.54', '79.9']],
}
const G = 'text-[#00e000]'
const W = 'text-[#c0c0c0]'
const stats = [
  ['今开', '15.87', G, '均价', '15.57', G],
  ['最高', '16.09', 'text-[#ff2020]', '量比', '0.58', G],
  ['最低', '15.31', G, '市值', '100.5亿', W],
  ['现量', '6631', 'text-[#c000c0]', '总量', '321822', W],
  ['外盘', '147660', 'text-[#ff2020]', '内盘', '174162', G],
]
const stats2 = [
  ['换手', '5.04%', W, '股本', '6.45亿', W],
  ['净资', '4.31', W, '流通', '6.38亿', W],
  ['收益㈢', '0.270', W, 'PE(动)', '43.5', W],
]
const flows = [
  ['净流入额', 17, '-4094万', '-8%'],
  ['大宗流入', 5, '-1258万', '-3%'],
  ['5日净流入额', 25, '-6206万', '-2%'],
  ['5日大宗流入', 36, '-8339万', '-2%'],
]
const trades = [
  ['14:56', '15.51', '84.2', 'S', 28], ['14:56', '15.52', '18.0', 'B', 15], ['14:56', '15.51', '33.3', 'S', 13], ['14:56', '15.53', '16.2', 'B', 9],
  ['14:56', '15.53', '18.5', 'B', 12], ['14:56', '15.53', '7.3', 'S', 8], ['14:56', '15.53', '27.6', 'S', 16], ['14:56', '15.53', '14.6', 'S', 11],
  ['14:56', '15.54', '19.0', 'B', 16], ['14:56', '15.54', '12.7', 'B', 17], ['14:56', '15.54', '9.5', 'S', 12], ['14:56', '15.54', '12.6', 'S', 15],
  ['14:56', '15.55', '19.7', 'B', 23], ['14:56', '15.55', '22.2', 'B', 19], ['14:56', '15.54', '24.7', 'S', 12], ['14:56', '15.54', '27.4', 'S', 16],
  ['14:56', '15.55', '15.6', 'B', 14], ['14:56', '15.54', '43.8', 'S', 22], ['14:56', '15.54', '18.8', 'S', 25], ['14:57', '15.55', '24.9', 'B', 14],
  ['15:00', '15.58', '1033', '', 531],
]

function BookRow({ r }) {
  return (
    <div className="h-[27px] flex items-center pl-[3px] pr-[6px] pt-[3px]">
      <span className="w-[107px] text-[22.5px] text-[#c0c0c0] relative whitespace-nowrap">
        {r[0]}
        {r[3] && <span className="absolute left-[52px] text-[22px]">{r[3]}</span>}
      </span>
      <span className="text-[21px] font-bold text-[#00e000]">{r[1]}</span>
      <span className="ml-auto flex items-baseline text-[#c0c000]">
        <span className="text-[21px] font-bold">{r[2]}</span>
        <span className="text-[22px]">万</span>
      </span>
    </div>
  )
}

function StatRow({ r, pad }) {
  return (
    <div style={{ paddingTop: pad }} className="h-[28.6px] flex items-center pl-[3px] text-[22.5px] whitespace-nowrap">
      <div className="w-[160px] flex items-center justify-between">
        <span className="text-[#c0c0c0]">{r[0]}</span>
        <span className={`text-[21px] font-bold ${r[2]}`}>{r[1]}</span>
      </div>
      <div className="ml-[8px] w-[159px] flex items-center justify-between">
        <span className="text-[#c0c0c0]">{r[3]}</span>
        <span className={`text-[21px] font-bold ${r[5]}`}>{r[4]}</span>
      </div>
    </div>
  )
}

function QuotePanel() {
  return (
    <div className="w-[335px] bg-black overflow-hidden">
      <div className="h-[85px] border-b-2 border-[#a80000]">
        <div className="h-[44px] flex items-center pl-[31px] whitespace-nowrap">
          <span className="text-[#e04040] text-[20px] w-[21px]">L</span>
          <span className="text-[#10d8f0] text-[29px] leading-none w-[121px] font-medium">新疆交建</span>
          <span className="text-[#b0b0b0] text-[20px] font-bold tracking-[0.5px]">002941</span>
        </div>
        <div className="h-[39px] flex items-center pl-[5px] text-[#00e000] text-[29.5px] leading-none font-bold whitespace-nowrap">
          <span className="w-[119px]">15.58</span>
          <svg width="21" height="20" viewBox="0 0 21 20" className="shrink-0"><polygon points="0,0 21,0 10.5,20" fill="#00e000" /></svg>
          <span className="w-[90px]">-0.32</span>
          <span>-2.01%</span>
        </div>
      </div>
      {book.sell.map((r) => <BookRow key={r[0]} r={r} />)}
      <div className="h-[2px] flex">
        <i className="w-[246px] bg-[#b8862a]" />
        <i className="flex-1 bg-[#205f9f]" />
      </div>
      <div className="h-[140px] pt-[1px] border-b-2 border-[#a80000]">
        {book.buy.map((r) => <BookRow key={r[0]} r={r} />)}
      </div>
      <div className="h-[145px] border-b-2 border-[#a80000]">
        {stats.map((r) => <StatRow key={r[0]} r={r} pad={5} />)}
      </div>
      <div className="h-[93px] border-b-2 border-[#a80000]">
        {stats2.map((r) => <StatRow key={r[0]} r={r} pad={7} />)}
      </div>
      <div className="h-[120px] border-b-2 border-[#a80000]">
        {flows.map((f) => (
          <div key={f[0]} className="h-[28.6px] flex items-center pl-[3px] pr-[3px] pt-[6px] whitespace-nowrap text-[#00e000]">
            <span className="w-[138px] text-[23px] text-[#c0c0c0]">{f[0]}</span>
            <span className="w-[46px]"><i style={{ width: f[1] }} className="block h-[10px] bg-[#00e000]" /></span>
            <span className="text-[21px] font-bold">{f[2].slice(0, -1)}</span>
            <span className="text-[21px]">万</span>
            <span className="ml-auto text-[21px] font-bold">{f[3]}</span>
          </div>
        ))}
      </div>
      {trades.map((t, i) => {
        const big = i === 0 || t[3] === ''
        return (
          <div key={i} className="h-[27px] flex items-center pl-[3px] pt-[3px] font-bold text-[21px] whitespace-nowrap">
            <span className="w-[103px] text-[#c0c0c0]">{t[0]}</span>
            <span className="w-[60px] text-[#00e000]">{t[1]}</span>
            <span className={`w-[86px] text-right ${big ? 'text-[#c000c0]' : 'text-[#c0c000]'}`}>
              {t[2]}<span className="font-normal">万</span>
            </span>
            <span className={`w-[48px] text-center ${t[3] === 'S' ? 'text-[#00e000]' : 'text-[#ff2020]'}`}>{t[3]}</span>
            <span className="w-[30px] flex justify-end text-[#a0a0a0]">{t[4]}</span>
          </div>
        )
      })}
    </div>
  )
}

function IconBox({ children }) {
  return (
    <svg width="24" height="23" viewBox="0 0 24 23">
      <rect x="1" y="1" width="22" height="21" fill="#fff" stroke="#4a90e8" strokeWidth="1.6" />
      {children}
    </svg>
  )
}

const Arrow = ({ d }) => (
  <svg width="24" height="24" viewBox="0 0 24 24">
    <path d={d} fill="#fff" stroke="#4a90e8" strokeWidth="1.8" />
  </svg>
)

function SideBar() {
  const cell = 'h-[34.7px] flex items-center justify-center'
  const numCell = 'h-[34.7px] flex items-center justify-center text-[17px] text-[#2050a8]'
  const dayCell = 'h-[34.7px] flex items-center justify-center text-[20px] text-[#1c4fa0]'
  return (
    <div className="flex-1 bg-[#f0f0f0] border-l border-[#c8c8c8]">
      <div className={cell}><Arrow d="M2 12 L10 5 V8.5 H22 V15.5 H10 V19 Z" /></div>
      <div className={cell}><Arrow d="M12 2 L20 10 H16 V22 H8 V10 H4 Z" /></div>
      <div className={cell}><Arrow d="M12 22 L20 14 H16 V2 H8 V14 H4 Z" /></div>
      <div className={cell}>
        <IconBox>
          <path d="M4 5 H10 M4 9 H10 M4 13 H10" stroke="#18a048" strokeWidth="2" />
          <path d="M13 5 H20 M13 9 H20" stroke="#e03030" strokeWidth="2" />
          <circle cx="16" cy="15" r="4.5" fill="#d8d8d8" stroke="#808080" />
        </IconBox>
      </div>
      <div className={cell}>
        <IconBox>
          <path d="M4 5 H20" stroke="#18a048" strokeWidth="2" />
          <path d="M4 9 H20" stroke="#2040d0" strokeWidth="2" />
          <path d="M4 13 H20" stroke="#e03030" strokeWidth="2" />
          <path d="M4 17 H20" stroke="#2040d0" strokeWidth="2" />
          <path d="M8 3 V19 M12.5 3 V19 M16.5 3 V19" stroke="#fff" />
        </IconBox>
      </div>
      <div className={cell}><IconBox><path d="M3 17 L8 12 L11 14 L16 8 L21 5" fill="none" stroke="#e03030" strokeWidth="1.6" /></IconBox></div>
      <div className={cell}>
        <IconBox>
          <path d="M6 7 V19 M12 3 V17 M18 3 V14" stroke="#c02020" />
          <rect x="4" y="10" width="4" height="6" fill="#e02020" />
          <rect x="10" y="8" width="4" height="7" fill="#10a040" />
          <rect x="16" y="5" width="4" height="6" fill="#e02020" />
        </IconBox>
      </div>
      <div className={cell}>
        <svg width="26" height="23" viewBox="0 0 26 23">
          <rect x="7" y="1" width="18" height="15" fill="#fff" stroke="#4a90e8" strokeWidth="1.4" />
          <rect x="1" y="5" width="19" height="16" fill="#fff" stroke="#4a90e8" strokeWidth="1.4" />
          <path d="M4 10 H17 M4 13 H17 M4 16 H17" stroke="#707070" strokeWidth="1.5" />
        </svg>
      </div>
      <div className={cell}><span className="border-[1.5px] border-[#4a90e8] bg-white text-[#2060c0] text-[14px] leading-[19px] w-[24px] text-center tracking-tighter">F10</span></div>
      <div className={cell}>
        <IconBox>
          <rect x="4" y="3" width="8" height="4" fill="#f0c040" />
          <rect x="12" y="9" width="8" height="4" fill="#f0c040" />
          <rect x="12" y="15" width="8" height="4" fill="#f0c040" />
          <path d="M6 7 V17 H12 M6 11 H12" fill="none" stroke="#4a90e8" />
        </IconBox>
      </div>
      <div className={cell}><span className="border-[1.5px] border-[#4a90e8] bg-white text-[#f08020] text-[15px] leading-[20px] w-[24px] text-center font-bold">自</span></div>
      <div className={cell}><span className="border-[1.5px] border-[#4a90e8] bg-white text-[#2060c0] text-[14px] leading-[19px] w-[24px] text-center tracking-tighter">F12</span></div>
      <div className={cell}><span className="border-[1.5px] border-[#409090] rounded-[5px] bg-white text-[#2060c0] text-[13px] leading-[19px] w-[25px] text-center italic">f(x)</span></div>
      <div className={cell}>
        <IconBox><circle cx="12" cy="11.5" r="5" fill="none" stroke="#2070d8" strokeWidth="2.2" /></IconBox>
      </div>
      <div className="h-[9px] flex items-center px-[3px]"><i className="w-full h-[1px] bg-[#b0b0b0]" /></div>
      <div className={cell}>
        <IconBox>
          <path d="M3 8 Q6 4 9 8 T15 8 T21 8" fill="none" stroke="#e03030" strokeWidth="1.2" />
          <path d="M3 14 Q6 10 9 14 T15 14 T21 14" fill="none" stroke="#3040d0" strokeWidth="1.2" />
        </IconBox>
      </div>
      <div className={`${cell} text-[15px] font-bold text-[#3050c8] tracking-tighter`}>RSI</div>
      <div className={`${cell} text-[25px] font-bold text-[#d84040]`}>S</div>
      <div className={cell}>
        <svg width="24" height="24" viewBox="0 0 24 24" fill="#1848c0">
          <path d="M12 0 L16 5 H8 Z M12 24 L16 19 H8 Z M0 12 L5 8 V16 Z M24 12 L19 8 V16 Z" />
          <path d="M12 4 V20 M4 12 H20" stroke="#1848c0" strokeWidth="3.4" />
        </svg>
      </div>
      <div className={cell}>
        <svg width="24" height="24" viewBox="0 0 24 24">
          <path d="M3 21 L5 15 L17 3 L21 7 L9 19 Z" fill="#f0b040" stroke="#b07020" />
          <path d="M3 21 L5 15 L9 19 Z" fill="#604020" />
          <path d="M17 3 L21 7 L19 9 L15 5 Z" fill="#e06060" />
        </svg>
      </div>
      <div className="h-[12px] flex items-center px-[3px]"><i className="w-full h-[1px] bg-[#b0b0b0]" /></div>
      <div className={cell}><span className="border-[2px] border-[#3a80e0] bg-white text-[#2060c0] text-[15px] leading-[19px] w-[25px] text-center">F5</span></div>
      <div className={cell}>
        <IconBox>
          <path d="M6 11 A6 6 0 0 1 17 8 M18 12 A6 6 0 0 1 7 15" fill="none" stroke="#40b860" strokeWidth="2.6" />
        </IconBox>
      </div>
      {['1', '5', '15', '30', '60'].map((t) => <div key={t} className={numCell}>{t}</div>)}
      <div className="h-[34.7px] flex items-center justify-center text-[20px] text-[#1c4fa0] bg-[#fafafa] border-l-2 border-t-2 border-[#b8b8b8]">日</div>
      {['周', '月', 'N', '多', '季', '年'].map((t) => <div key={t} className={dayCell}>{t}</div>)}
    </div>
  )
}

function StatusBar() {
  const R = 'text-[#ff0000]'
  const cells = [
    ['上证', 54, 'name'], ['3271.03', 102, R], ['11.17', 74, R], ['0.34%', 86, R], ['4054', 96, 'amt'],
    ['沪深', 53, 'name'], ['4276.52', 102, R], ['21.22', 75, R], ['0.50%', 85, R], ['2264', 96, 'amt'],
    ['创业', 54, 'name'], ['2715.95', 102, R], ['27.72', 76, R], ['1.03%', 85, R], ['2070', 97, 'amt'],
  ]
  return (
    <div className="h-[37px] bg-[#f0f0f0] flex items-center whitespace-nowrap">
      <div className="w-[25px] flex justify-center">
        <span className="w-[20px] h-[24px] rounded-[3px] bg-[#f2a020] border border-[#c08020] flex items-center justify-center">
          <i className="w-[11px] h-[9px] bg-[#ffe070]" />
        </span>
      </div>
      {cells.map(([t, w, k], i) => (
        <span key={i} style={{ width: w }} className="shrink-0 pt-[4px]">
          {k === 'name' && <span className="text-[23px] text-[#333]">{t}</span>}
          {k === 'amt' && (
            <span className="text-[21px] font-bold text-[#111]">{t}<span className="text-[23px] font-normal text-[#333]">亿</span></span>
          )}
          {k !== 'name' && k !== 'amt' && <span className={`text-[21px] font-bold ${k}`}>{t}</span>}
        </span>
      ))}
      <span className="h-full border-l border-[#b0b0b0] pl-[3px] pt-[4px] flex items-center text-[23px] text-[#333] w-[86px]">总成交</span>
      <span className="pt-[4px] text-[21px] font-bold text-[#111]">9</span>
    </div>
  )
}

function Watermark() {
  return (
    <div className="absolute right-0 bottom-0 w-[800px] h-[81px] bg-[#7fabd9] flex items-center">
      <span className="ml-[15px] w-[284px] text-[56px] leading-none font-black text-[#180a90] whitespace-nowrap">公式指标网</span>
      <svg width="96" height="81" viewBox="0 0 96 81" className="ml-[12px] shrink-0">
        <path d="M11 42 A37 37 0 0 1 85 30" fill="none" stroke="#d8644f" strokeWidth="8" />
        <path d="M85 46 A37 37 0 0 1 48 78" fill="none" stroke="#ecc94b" strokeWidth="8" />
        <path d="M44 0 H52 L55 15 H72 V26 H56 V32 H76 V44 H56 V52 H70 V62 H56 L60 78 H38 L42 62 H26 V52 H40 V44 H20 V32 H40 V26 H24 V15 H41 Z" fill="#ecc94b" />
      </svg>
      <span className="ml-[14px] font-['DejaVu_Serif',serif] font-bold text-[49px] leading-none text-white whitespace-nowrap tracking-[-0.5px]">www.9m8.cn</span>
    </div>
  )
}

export default function App() {
  return (
    <div className="w-[2160px] h-[1395px] relative overflow-hidden bg-black font-['Liberation_Sans','Noto_Sans_CJK_SC',sans-serif]">
      <TitleBar />
      <div className="h-[1324px] flex">
        <div className="w-[1788px] border-r border-[#a80000] flex flex-col">
          <PeriodBar />
          <div className="relative flex-1 overflow-hidden">
            <div className="relative h-[671px]">
              <MainChart />
              <MainHeader />
            </div>
            <div className="relative h-[292px]">
              <VolChart />
              <VolHeader />
            </div>
            <div className="relative h-[252px]">
              <AdChart />
              <AdHeader />
            </div>
            <DateAxis />
            <BottomTabs />
            {/* 截图里这块被黑色盖住了 */}
            <div className="absolute left-[540px] top-[576px] w-[1080px] h-[107px] bg-black" />
            <span className="absolute left-[1620px] top-[656px] w-[15px] h-[15px] text-[14px] leading-[15px] bg-[#3a2010] text-[#c09060]">隐</span>
          </div>
        </div>
        <QuotePanel />
        <SideBar />
      </div>
      <StatusBar />
      <Watermark />
    </div>
  )
}
